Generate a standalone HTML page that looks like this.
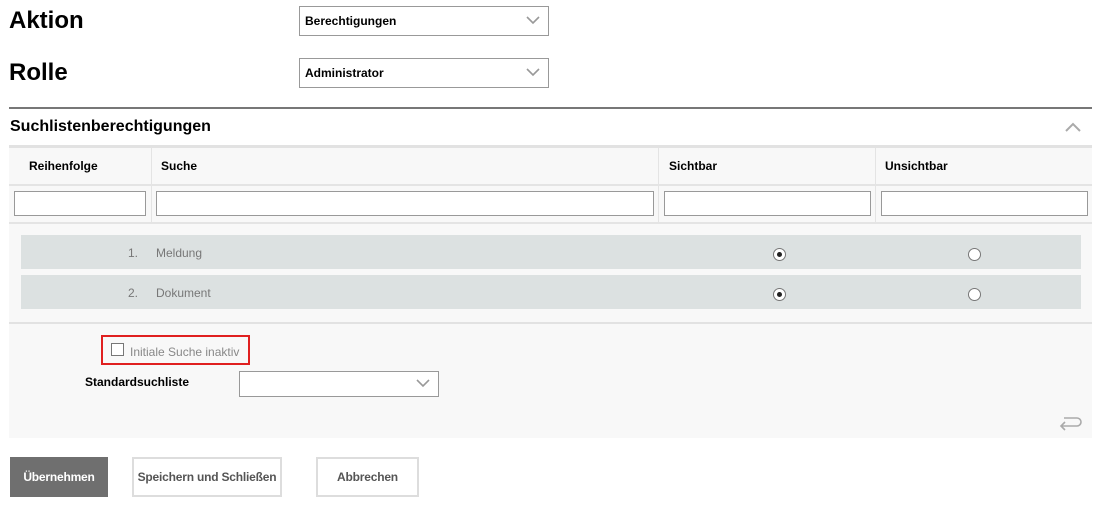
<!DOCTYPE html>
<html><head><meta charset="utf-8"><style>
*{box-sizing:border-box;margin:0;padding:0}
body{width:1100px;height:505px;background:#fff;font-family:"Liberation Sans",Arial,sans-serif;position:relative;overflow:hidden;color:#000}
.abs{position:absolute}
.h1{font-size:24px;font-weight:bold}
.sel{position:absolute;border:1px solid #999;background:#fff;font-size:12px;font-weight:bold;padding-left:5px;display:flex;align-items:center}
.chev{position:absolute;right:8px;top:50%;margin-top:-6px}
.b{font-weight:bold;font-size:12px}
.inp{position:absolute;border:1px solid #999;background:#fff;height:25px;top:191px}
.row{position:absolute;left:21px;width:1060px;height:34px;background:#dce1e1;font-size:12px;color:#777}
.radio{position:absolute;width:13px;height:13px;border:1px solid #777;border-radius:50%;background:#fff}
.radio.on::after{content:"";position:absolute;left:3px;top:3px;width:5px;height:5px;border-radius:50%;background:#222}
.btn{position:absolute;top:457px;height:40px;border:2px solid #ddd;background:#fff;font-size:12px;font-weight:bold;color:#555;display:flex;align-items:center;justify-content:center;letter-spacing:-0.2px}
</style></head><body>
<div class="abs h1" style="left:9px;top:7px">Aktion</div>
<div class="abs h1" style="left:9px;top:59px">Rolle</div>
<div class="sel" style="left:299px;top:6px;width:250px;height:30px">Berechtigungen<svg class="chev" width="14" height="10" viewBox="0 0 14 10"><path d="M1 2l6 6 6-6" stroke="#999" stroke-width="1.6" fill="none"/></svg></div>
<div class="sel" style="left:299px;top:58px;width:250px;height:30px">Administrator<svg class="chev" width="14" height="10" viewBox="0 0 14 10"><path d="M1 2l6 6 6-6" stroke="#999" stroke-width="1.6" fill="none"/></svg></div>

<div class="abs" style="left:9px;top:107px;width:1083px;height:2px;background:#777"></div>
<div class="abs" style="left:10px;top:118px;font-size:16px;font-weight:bold">Suchlistenberechtigungen</div>
<svg class="abs" style="left:1065px;top:122px" width="16" height="10" viewBox="0 0 16 10"><path d="M1 9l7-7 7 7" stroke="#aaa" stroke-width="2" fill="none"/></svg>

<div class="abs" style="left:9px;top:145px;width:1083px;height:3px;background:#e2e2e2"></div>
<div class="abs" style="left:9px;top:148px;width:1083px;height:290px;background:#f8f8f8"></div>
<div class="abs" style="left:9px;top:184px;width:1083px;height:2px;background:#e4e4e4"></div>
<div class="abs" style="left:9px;top:222px;width:1083px;height:2px;background:#e4e4e4"></div>
<div class="abs" style="left:151px;top:148px;width:1px;height:75px;background:#e4e4e4"></div>
<div class="abs" style="left:658px;top:148px;width:1px;height:75px;background:#e4e4e4"></div>
<div class="abs" style="left:875px;top:148px;width:1px;height:75px;background:#e4e4e4"></div>
<div class="abs b" style="left:29px;top:159px">Reihenfolge</div>
<div class="abs b" style="left:161px;top:159px">Suche</div>
<div class="abs b" style="left:669px;top:159px">Sichtbar</div>
<div class="abs b" style="left:885px;top:159px">Unsichtbar</div>
<div class="inp" style="left:14px;width:132px"></div>
<div class="inp" style="left:156px;width:498px"></div>
<div class="inp" style="left:664px;width:207px"></div>
<div class="inp" style="left:881px;width:207px"></div>

<div class="row" style="top:235px"><span class="abs" style="left:107px;top:11px">1.</span><span class="abs" style="left:135px;top:11px">Meldung</span><div class="radio on" style="left:752px;top:13px"></div><div class="radio" style="left:947px;top:13px"></div></div>
<div class="row" style="top:275px"><span class="abs" style="left:107px;top:11px">2.</span><span class="abs" style="left:135px;top:11px">Dokument</span><div class="radio on" style="left:752px;top:13px"></div><div class="radio" style="left:947px;top:13px"></div></div>

<div class="abs" style="left:9px;top:322px;width:1083px;height:2px;background:#e2e2e2"></div>
<div class="abs" style="left:101px;top:335px;width:149px;height:30px;border:2px solid #e02020"></div>
<div class="abs" style="left:111px;top:343px;width:13px;height:13px;border:1px solid #777;background:#fff"></div>
<div class="abs" style="left:130px;top:345px;font-size:12px;color:#888">Initiale Suche inaktiv</div>
<div class="abs b" style="left:85px;top:375px">Standardsuchliste</div>
<div class="sel" style="left:239px;top:371px;width:200px;height:26px"><svg class="chev" width="14" height="10" viewBox="0 0 14 10"><path d="M1 2l6 6 6-6" stroke="#999" stroke-width="1.6" fill="none"/></svg></div>
<svg class="abs" style="left:1058px;top:414px" width="26" height="20" viewBox="0 0 26 20"><path d="M6 4h13a4 4 0 0 1 0 8H3M7 8l-4 4 4 4" stroke="#aaa" stroke-width="1.6" fill="none"/></svg>

<div class="btn" style="left:10px;width:98px;background:#6f6f6f;border-color:#6f6f6f;color:#fff">Übernehmen</div>
<div class="btn" style="left:132px;width:150px">Speichern und Schließen</div>
<div class="btn" style="left:316px;width:103px">Abbrechen</div>
</body></html>
